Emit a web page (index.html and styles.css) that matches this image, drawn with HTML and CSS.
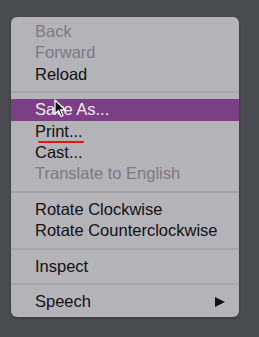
FILE: index.html
```html
<!DOCTYPE html>
<html lang="en">
<head>
    <meta charset="UTF-8">
    <title>Context menu</title>
    <link rel="stylesheet" href="styles.css">
</head>
<body>
    <div class="menu">
        <!-- navigation -->
        <div class="group">
            <div class="item disabled">Back</div>
            <div class="item disabled">Forward</div>
            <div class="item">Reload</div>
        </div>
        <div class="sep"></div>
        <!-- page -->
        <div class="group">
            <div class="item active">Save As...
                <svg class="cursor" width="12" height="19" viewBox="0 0 12 19">
                    <path d="M1 1 L1 15 L4.5 11.5 L7 17.5 L9 16.6 L6.6 10.8 L11 10.8 Z" fill="#111" stroke="#fff" stroke-width="1.2" stroke-linejoin="round"/>
                </svg>
            </div>
            <div class="item"><span class="mark">Print...</span></div>
            <div class="item">Cast...</div>
            <div class="item disabled">Translate to English</div>
        </div>
        <div class="sep"></div>
        <div class="group">
            <div class="item">Rotate Clockwise</div>
            <div class="item">Rotate Counterclockwise</div>
        </div>
        <div class="sep"></div>
        <div class="group">
            <div class="item">Inspect</div>
        </div>
        <div class="sep"></div>
        <div class="group">
            <div class="item sub">Speech <span class="arrow"></span></div>
        </div>
    </div>
</body>
</html>
```

FILE: styles.css
```css
* {
    margin: 0;
    padding: 0;
    box-sizing: border-box;
}
body {
    width: 259px;
    height: 337px;
    background: #4a4b4f;
    font-family: "Liberation Sans", Arial, sans-serif;
    padding: 17px 20px 0 11px;
}

.menu {
    width: 228px;
    height: 300px;
    background: #b4b3b7;
    border-radius: 6px;
    padding-top: 4px;
    box-shadow: 0 1px 3px rgba(0, 0, 0, 0.3);
}
.item {
    position: relative;
    height: 21.4px;
    line-height: 21.4px;
    padding-left: 24px;
    font-size: 16.5px;
    color: #111;
    white-space: nowrap;
}
.item.disabled {
    color: #7b7a7f;
}
.item.active {
    background: #7a3f85;
    color: #f4eef5;
}
.mark {
    display: inline-block;
    position: relative;
}
.mark::after {
    content: "";
    position: absolute;
    left: 3px;
    right: -1px;
    bottom: -1px;
    height: 2px;
    border-radius: 1px;
    background: #e4141b;
}
.cursor {
    position: absolute;
    left: 43px;
    top: 0;
}
.sep {
    height: 2px;
    margin: 6px 0;
    background: #a6a5a9;
}
.sub {
    display: flex;
    align-items: center;
    justify-content: space-between;
    padding-right: 14px;
}
.arrow {
    width: 0;
    height: 0;
    border-left: 10px solid #111;
    border-top: 5.5px solid transparent;
    border-bottom: 5.5px solid transparent;
}
```
